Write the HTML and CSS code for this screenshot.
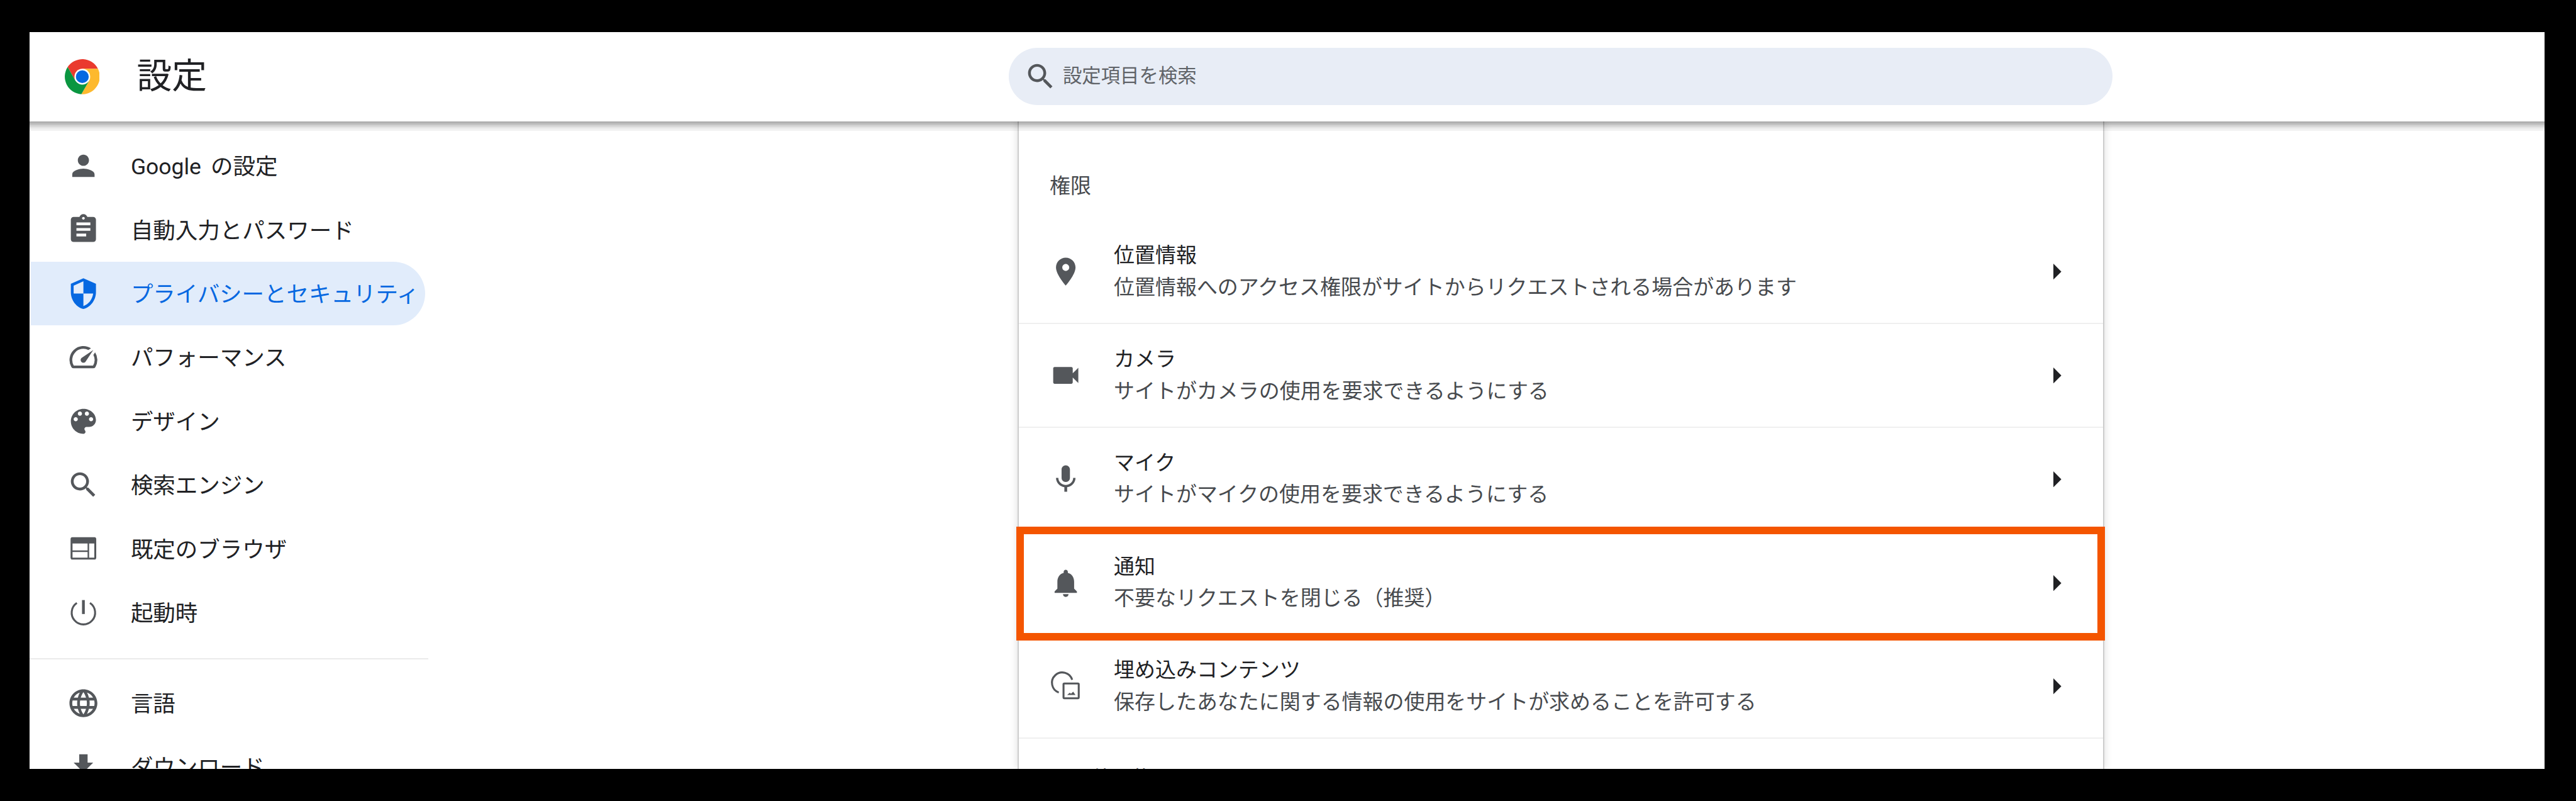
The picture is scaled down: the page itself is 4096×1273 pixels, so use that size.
FILE: index.html
```html
<!DOCTYPE html>
<html lang="ja">
<head>
<meta charset="utf-8">
<title>設定</title>
<link rel="stylesheet" href="styles.css">
</head>
<body>
<div class="page">
  <div class="window">
    <header class="header">
      <div class="brand">
        <svg class="logo" viewBox="0 0 24 24">
          <path fill="#ea3a2e" d="M12 6.6H22.7A12 12 0 0 0 1.97 5.43L7.32 14.7 12 12Z"/>
          <path fill="#fdb92e" d="M16.68 14.7 11.33 23.97A12 12 0 0 0 22.7 6.6H12V12Z"/>
          <path fill="#0a9640" d="M7.32 14.7 1.97 5.43A12 12 0 0 0 11.33 23.97L16.68 14.7 12 12Z"/>
          <circle cx="12" cy="12" r="5.4" fill="#fff"/>
          <circle cx="12" cy="12" r="4.4" fill="#0668e1"/>
        </svg>
        <h1 class="title">設定</h1>
      </div>
      <div class="search">
        <svg class="icon search-icon" viewBox="0 0 24 24"><path d="M15.5 14h-.79l-.28-.27C15.41 12.59 16 11.11 16 9.5 16 5.91 13.09 3 9.5 3S3 5.91 3 9.5 5.91 16 9.5 16c1.61 0 3.09-.59 4.23-1.57l.27.28v.79l5 4.99L20.49 19l-4.99-5zm-6 0C7.01 14 5 11.99 5 9.5S7.01 5 9.5 5 14 7.01 14 9.5 11.99 14 9.5 14z"/></svg>
        <span class="placeholder">設定項目を検索</span>
      </div>
    </header>
    <div class="body">
      <nav class="sidebar">
        <a class="nav-item"><svg class="icon" viewBox="0 0 24 24"><path d="M12 12c2.21 0 4-1.79 4-4s-1.79-4-4-4-4 1.79-4 4 1.79 4 4 4zm0 2c-2.67 0-8 1.34-8 4v2h16v-2c0-2.66-5.33-4-8-4z"/></svg><span class="nav-label">Google の設定</span></a>
        <a class="nav-item"><svg class="icon" viewBox="0 0 24 24"><path d="M19 3h-4.18C14.4 1.84 13.3 1 12 1c-1.3 0-2.4.84-2.82 2H5c-1.1 0-2 .9-2 2v14c0 1.1.9 2 2 2h14c1.1 0 2-.9 2-2V5c0-1.1-.9-2-2-2zm-7 0c.55 0 1 .45 1 1s-.45 1-1 1-1-.45-1-1 .45-1 1-1zm2 14H7v-2h7v2zm3-4H7v-2h10v2zm0-4H7V7h10v2z"/></svg><span class="nav-label">自動入力とパスワード</span></a>
        <a class="nav-item is-active"><svg class="icon" viewBox="0 0 24 24"><path d="M12 1L3 5v6c0 5.55 3.84 10.74 9 12 5.16-1.26 9-6.45 9-12V5l-9-4zm0 10.99h7c-.53 4.12-3.28 7.79-7 8.94V12H5V6.3l7-3.11v8.8z"/></svg><span class="nav-label">プライバシーとセキュリティ</span></a>
        <a class="nav-item"><svg class="icon" viewBox="0 0 24 24"><path d="M20.38 8.57l-1.23 1.85a8 8 0 0 1-.22 7.58H5.07A8 8 0 0 1 15.58 6.85l1.85-1.23A10 10 0 0 0 3.35 19a2 2 0 0 0 1.72 1h13.85a2 2 0 0 0 1.74-1 10 10 0 0 0-.27-10.44zm-9.79 6.84a2 2 0 0 0 2.83 0l5.66-8.49-8.49 5.66a2 2 0 0 0 0 2.83z"/></svg><span class="nav-label">パフォーマンス</span></a>
        <a class="nav-item"><svg class="icon" viewBox="0 0 24 24"><path d="M12 3c-4.97 0-9 4.03-9 9s4.03 9 9 9c.83 0 1.5-.67 1.5-1.5 0-.39-.15-.74-.39-1.01-.23-.26-.38-.61-.38-.99 0-.83.67-1.5 1.5-1.5H16c2.76 0 5-2.24 5-5 0-4.42-4.03-8-9-8zm-5.5 9c-.83 0-1.5-.67-1.5-1.5S5.67 9 6.5 9 8 9.67 8 10.5 7.33 12 6.5 12zm3-4C8.67 8 8 7.33 8 6.5S8.67 5 9.5 5s1.5.67 1.5 1.5S10.33 8 9.5 8zm5 0c-.83 0-1.5-.67-1.5-1.5S13.67 5 14.5 5s1.5.67 1.5 1.5S15.33 8 14.5 8zm3 4c-.83 0-1.5-.67-1.5-1.5S16.67 9 17.5 9s1.5.67 1.5 1.5-.67 1.5-1.5 1.5z"/></svg><span class="nav-label">デザイン</span></a>
        <a class="nav-item"><svg class="icon" viewBox="0 0 24 24"><path d="M15.5 14h-.79l-.28-.27C15.41 12.59 16 11.11 16 9.5 16 5.91 13.09 3 9.5 3S3 5.91 3 9.5 5.91 16 9.5 16c1.61 0 3.09-.59 4.23-1.57l.27.28v.79l5 4.99L20.49 19l-4.99-5zm-6 0C7.01 14 5 11.99 5 9.5S7.01 5 9.5 5 14 7.01 14 9.5 11.99 14 9.5 14z"/></svg><span class="nav-label">検索エンジン</span></a>
        <a class="nav-item"><svg class="icon" viewBox="0 0 24 24"><path fill-rule="evenodd" d="M20 4H4c-.7 0-1.2.6-1.2 1.3v13.4c0 .7.5 1.3 1.2 1.3h16c.7 0 1.2-.6 1.2-1.3V5.3c0-.7-.5-1.3-1.2-1.3zm-5 14.6H4.2v-4.1H15v4.1zm0-5.2H4.2V8.5H15v4.9zm4.8 5.2h-3.7V8.5h3.7v10.1z"/></svg><span class="nav-label">既定のブラウザ</span></a>
        <a class="nav-item"><svg class="icon" viewBox="0 0 24 24"><path d="M11 3h2v10h-2z"/><path class="line" d="M7.3 5.1A8.4 8.4 0 1 0 16.7 5.1"/></svg><span class="nav-label">起動時</span></a>
        <div class="nav-divider"></div>
        <a class="nav-item"><svg class="icon" viewBox="0 0 24 24"><path d="M11.99 2C6.47 2 2 6.48 2 12s4.47 10 9.99 10C17.52 22 22 17.52 22 12S17.52 2 11.99 2zm6.93 6h-2.95c-.32-1.25-.78-2.45-1.38-3.56 1.84.63 3.37 1.91 4.33 3.56zM12 4.04c.83 1.2 1.48 2.53 1.91 3.96h-3.82c.43-1.43 1.08-2.76 1.91-3.96zM4.26 14C4.1 13.36 4 12.69 4 12s.1-1.36.26-2h3.38c-.08.66-.14 1.32-.14 2 0 .68.06 1.34.14 2H4.26zm.82 2h2.95c.32 1.25.78 2.45 1.38 3.56-1.84-.63-3.37-1.9-4.33-3.56zm2.95-8H5.08c.96-1.66 2.49-2.93 4.33-3.56C8.81 5.55 8.35 6.75 8.03 8zM12 19.96c-.83-1.2-1.48-2.53-1.91-3.96h3.82c-.43 1.43-1.08 2.76-1.91 3.96zM14.34 14H9.66c-.09-.66-.16-1.32-.16-2 0-.68.07-1.35.16-2h4.68c.09.65.16 1.32.16 2 0 .68-.07 1.34-.16 2zm.25 5.56c.6-1.11 1.06-2.31 1.38-3.56h2.95c-.96 1.65-2.49 2.93-4.33 3.56zM16.36 14c.08-.66.14-1.32.14-2 0-.68-.06-1.34-.14-2h3.38c.16.64.26 1.31.26 2s-.1 1.36-.26 2h-3.38z"/></svg><span class="nav-label">言語</span></a>
        <a class="nav-item"><svg class="icon" viewBox="0 0 24 24"><path d="M19 9h-4V3H9v6H5l7 7 7-7zM5 18v2h14v-2H5z"/></svg><span class="nav-label">ダウンロード</span></a>
      </nav>
      <main class="main">
        <section class="card">
          <h2 class="heading">権限</h2>
          <div class="row">
            <svg class="icon" viewBox="0 0 24 24"><path d="M12 2C8.13 2 5 5.13 5 9c0 5.25 7 13 7 13s7-7.75 7-13c0-3.87-3.13-7-7-7zm0 9.5c-1.38 0-2.5-1.12-2.5-2.5s1.12-2.5 2.5-2.5 2.5 1.12 2.5 2.5-1.12 2.5-2.5 2.5z"/></svg>
            <div class="row-text"><div class="row-title">位置情報</div><div class="row-sub">位置情報へのアクセス権限がサイトからリクエストされる場合があります</div></div>
            <svg class="arrow" viewBox="0 0 5 10"><path d="M0 0l5 5-5 5z"/></svg>
          </div>
          <div class="row">
            <svg class="icon" viewBox="0 0 24 24"><path d="M17 10.5V7c0-.55-.45-1-1-1H4c-.55 0-1 .45-1 1v10c0 .55.45 1 1 1h12c.55 0 1-.45 1-1v-3.5l4 4v-11l-4 4z"/></svg>
            <div class="row-text"><div class="row-title">カメラ</div><div class="row-sub">サイトがカメラの使用を要求できるようにする</div></div>
            <svg class="arrow" viewBox="0 0 5 10"><path d="M0 0l5 5-5 5z"/></svg>
          </div>
          <div class="row">
            <svg class="icon" viewBox="0 0 24 24"><path d="M12 14c1.66 0 3-1.34 3-3V5c0-1.66-1.34-3-3-3S9 3.34 9 5v6c0 1.66 1.34 3 3 3zm5.3-3c0 3-2.54 5.1-5.3 5.1S6.7 14 6.7 11H5c0 3.41 2.72 6.23 6 6.72V21h2v-3.28c3.28-.48 6-3.3 6-6.72h-1.7z"/></svg>
            <div class="row-text"><div class="row-title">マイク</div><div class="row-sub">サイトがマイクの使用を要求できるようにする</div></div>
            <svg class="arrow" viewBox="0 0 5 10"><path d="M0 0l5 5-5 5z"/></svg>
          </div>
          <div class="row">
            <svg class="icon" viewBox="0 0 24 24"><path d="M12 22c1.1 0 2-.9 2-2h-4c0 1.1.9 2 2 2zm6-6v-5c0-3.07-1.63-5.64-4.5-6.32V4c0-.83-.67-1.5-1.5-1.5s-1.5.67-1.5 1.5v.68C7.64 5.36 6 7.92 6 11v5l-2 2v1h16v-1l-2-2z"/></svg>
            <div class="row-text"><div class="row-title">通知</div><div class="row-sub">不要なリクエストを閉じる（推奨）</div></div>
            <svg class="arrow" viewBox="0 0 5 10"><path d="M0 0l5 5-5 5z"/></svg>
            <div class="callout"></div>
          </div>
          <div class="row">
            <svg class="icon" viewBox="0 0 24 24"><path class="line" d="M16.6 7.4A7.4 7.4 0 1 0 7 16.5"/><rect class="line" x="10.4" y="10" width="10.9" height="10.6" rx=".6"/><path d="M13 18.3h6l-1.7-2.4-1.5 1.5-1-.7z"/></svg>
            <div class="row-text"><div class="row-title">埋め込みコンテンツ</div><div class="row-sub">保存したあなたに関する情報の使用をサイトが求めることを許可する</div></div>
            <svg class="arrow" viewBox="0 0 5 10"><path d="M0 0l5 5-5 5z"/></svg>
          </div>
          <h2 class="heading heading-more">その他の権限</h2>
        </section>
      </main>
    </div>
  </div>
</div>
</body>
</html>
```

FILE: styles.css
```css
html, body {
  margin: 0;
  height: 100%;
  background: #000;
  overflow: hidden;
}

.page {
  zoom: 2.5355;
  padding: 20px 19.75px 20px 18.5px;
  font-family: Roboto, "Noto Sans CJK JP", sans-serif;
  color: #202124;
}

.window {
  display: flex;
  flex-direction: column;
  height: 462px;
  background: #fff;
  overflow: hidden;
}

.header {
  position: relative;
  z-index: 2;
  flex: none;
  display: flex;
  align-items: center;
  height: 56px;
  background: #fff;
}

.header::after {
  content: "";
  position: absolute;
  left: 0;
  right: 0;
  top: 100%;
  height: 6px;
  background: linear-gradient(to bottom,
    rgba(0, 0, 0, .33) 0 16.66%,
    rgba(0, 0, 0, .27) 0 33.33%,
    rgba(0, 0, 0, .18) 0 50%,
    rgba(0, 0, 0, .12) 0 66.66%,
    rgba(0, 0, 0, .08) 0 83.33%,
    rgba(0, 0, 0, .05) 0 100%);
}

.brand {
  flex: none;
  display: flex;
  align-items: center;
  gap: 23.25px;
  width: 614.25px;
  padding-left: 22px;
  box-sizing: border-box;
}

.logo {
  width: 22px;
  height: 22px;
}

.title {
  margin: 0;
  font-size: 22px;
  line-height: 32px;
  font-weight: 400;
}

.search {
  flex: none;
  display: flex;
  align-items: center;
  gap: 3.5px;
  width: 692px;
  height: 36px;
  padding-left: 9.25px;
  box-sizing: border-box;
  border-radius: 18px;
  background: #e8edf6;
}

.search-icon {
  fill: #202124;
}

.placeholder {
  font-size: 12px;
  line-height: 20px;
  color: #5f6368;
}

.icon {
  flex: none;
  width: 21px;
  height: 21px;
  fill: #54575b;
}

.icon .line {
  fill: none;
  stroke: #54575b;
  stroke-width: 1.4;
}

.body {
  flex: 1;
  display: flex;
  min-height: 0;
}

.sidebar {
  flex: none;
  width: 250px;
  padding-top: 8px;
  box-sizing: border-box;
}

.nav-item {
  display: flex;
  align-items: center;
  gap: 19px;
  width: 247px;
  height: 40px;
  margin-left: 1px;
  padding-left: 22.5px;
  box-sizing: border-box;
  border-radius: 0 20px 20px 0;
  font-size: 14px;
  white-space: nowrap;
}

.nav-label {
  padding-bottom: 1.5px;
  word-spacing: 2.5px;
}

.nav-item.is-active {
  background: #e1ecfb;
  color: #0668e1;
}

.nav-item.is-active .icon {
  fill: #0668e1;
}

.nav-divider {
  height: 1px;
  margin: 8.5px 0 7.25px;
  background: #eaeaea;
}

.main {
  flex: 1;
  min-width: 0;
  padding-left: 369.5px;
}

.card {
  width: 681.5px;
  height: 100%;
  padding-top: 31px;
  box-sizing: border-box;
  border-left: 1px solid #cdcdcd;
  border-right: 1px solid #cdcdcd;
  background: #fff;
  box-shadow: 0 0 5px rgba(0, 0, 0, .14);
}

.heading {
  margin: 0 0 11.25px;
  padding-left: 19.5px;
  font-size: 13px;
  line-height: 20px;
  font-weight: 400;
  color: #474a4e;
}

.heading-more {
  margin: 15px 0 0;
}

.row {
  position: relative;
  display: flex;
  align-items: center;
  gap: 19.75px;
  height: 65px;
  padding: 0 26px 0 19px;
  box-sizing: border-box;
  border-bottom: 1px solid #efefef;
}

.row-text {
  flex: 1;
  min-width: 0;
  font-size: 13px;
  line-height: 20px;
}

.row-sub {
  color: #474a4e;
}

.arrow {
  flex: none;
  width: 5px;
  height: 10px;
  fill: #202124;
}

.callout {
  position: absolute;
  top: -3.25px;
  left: -1.5px;
  right: -1.5px;
  bottom: -4px;
  border: 5px solid #f45500;
}
```
